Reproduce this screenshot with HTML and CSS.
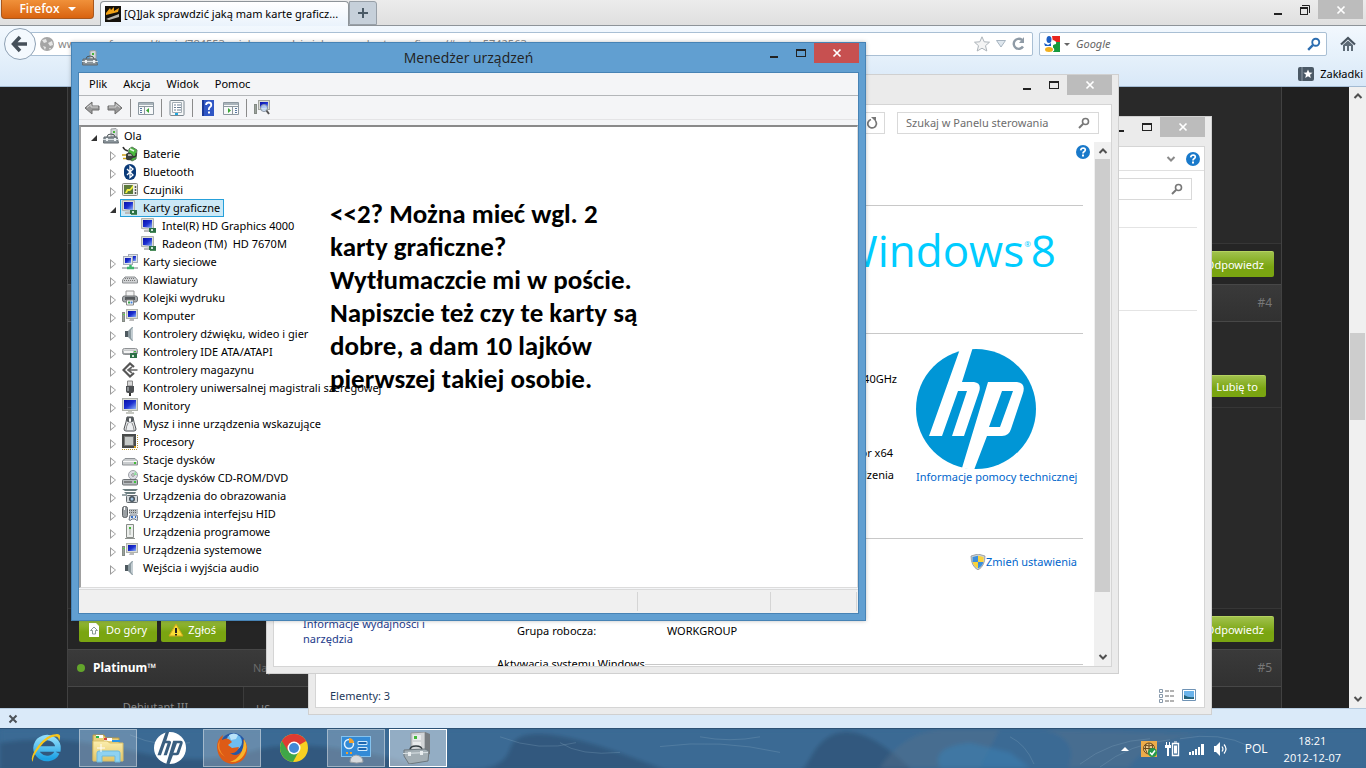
FILE: index.html
```html
<!DOCTYPE html>
<html lang="pl">
<head>
<meta charset="utf-8">
<title>Menedżer urządzeń</title>
<link rel="stylesheet" href="styles.css">
</head>
<body>
<svg class="defs" aria-hidden="true">
  <defs>
    <linearGradient id="screen" x1="0" y1="0" x2="1" y2="1"><stop offset="0" stop-color="#0a12a8"/><stop offset=".5" stop-color="#1c2fd0"/><stop offset="1" stop-color="#8fb4f8"/></linearGradient>
    <linearGradient id="metal" x1="0" y1="0" x2="0" y2="1"><stop offset="0" stop-color="#e8e8e8"/><stop offset="1" stop-color="#8a8f92"/></linearGradient>
    <linearGradient id="folder" x1="0" y1="0" x2="0" y2="1"><stop offset="0" stop-color="#fbeeae"/><stop offset="1" stop-color="#e3c565"/></linearGradient>
    <linearGradient id="ie" x1="0" y1="0" x2="0" y2="1"><stop offset="0" stop-color="#8fdcfa"/><stop offset="1" stop-color="#1ea2e4"/></linearGradient>
    <filter id="soft" x="0" y="0" width="1" height="1"><feGaussianBlur stdDeviation="2"/></filter>
    <symbol id="i-pc" viewBox="0 0 16 16"><path d="M8 6V1l5-.5 1 1V9H8z" fill="#d5d8da" stroke="#9a9ea1"/><path d="M10 3h2v2h-2z" fill="#47b53a"/><path d="M4 9q0-3 4-3t4 3" fill="none" stroke="#4d5558"/><path d="M1 9h13l1.500 6H.5z" fill="#8a949a" stroke="#626b70"/><path d="M0 11.500h16" stroke="#d7dee1"/><path d="M3 10h2v3H3zM11 10h2v3h-2z" fill="#eef2f4"/></symbol>
    <symbol id="i-bat" viewBox="0 0 16 16"><path d="M7 3l3-2 5 3-1 9-4 2-4-3z" fill="#49b93e" stroke="#5a7a58"/><path d="M8 3l4 2" stroke="#e4f7df" stroke-width="1.500" fill="none"/><path d="M1 1q1 3 5 4" stroke="#333" fill="none" stroke-width="1.500"/><path d="M0 9h5M1 12.500h5" stroke="#d0a31a" stroke-width="1.600"/><path d="M4 8q3-3 6 0l2 3-3 3q-4 1-5-1z" fill="#3a3f3a"/><path d="M6 8h3l1 2H6z" fill="#aaa"/><path d="M11 11q4 0 3-4" stroke="#333" fill="none" stroke-width="1.300"/></symbol>
    <symbol id="i-bt" viewBox="0 0 16 16"><rect x="2" y="0" width="12" height="16" rx="6" fill="#0a3a78"/><path d="M5 5l6 6-3 2.500V2.500L11 5l-6 6" fill="none" stroke="#fff" stroke-width="1.300"/></symbol>
    <symbol id="i-sens" viewBox="0 0 16 16"><rect x=".5" y="1.500" width="15" height="12" rx="1" fill="#ecece6" stroke="#8a8a80"/><rect x="2" y="3" width="9" height="9" fill="#5c7a3c"/><path d="M3 11l2-4h3l3-4v3L8 9H6l-1 2z" fill="#f0f03a"/><path d="M13.500 4v2M13.500 7v2M13.500 10v2" stroke="#555" stroke-width="1.500"/></symbol>
    <symbol id="i-mon" viewBox="0 0 16 16"><rect x=".5" y=".5" width="15" height="12" fill="#dadcd6" stroke="#b0b3ad"/><rect x="2" y="2" width="12" height="9" fill="url(#screen)"/><path d="M6 13h4v1h2v2H4v-2h2z" fill="#c5c7c1"/></symbol>
    <symbol id="i-gpu" viewBox="0 0 16 16"><path d="M.5.5h12v11l-12-1z" fill="#dadcd6" stroke="#b0b3ad"/><path d="M2 2h9v8l-9-1z" fill="url(#screen)"/><path d="M3 12h5v2H3z" fill="#bbb"/><rect x="8" y="10" width="7" height="4" fill="#2c7046"/><path d="M10 11h2v2h-2z" fill="#cfe8d6"/><path d="M9 14.500h6" stroke="#4f8f5e"/></symbol>
    <symbol id="i-net" viewBox="0 0 16 16"><rect x="6.500" y=".5" width="9" height="8" fill="#dfe3ea" stroke="#a6adb8"/><rect x="8" y="2" width="6" height="5" fill="url(#screen)"/><rect x="1.500" y="2.500" width="9" height="8" fill="#dfe3ea" stroke="#a6adb8"/><rect x="3" y="4" width="6" height="5" fill="url(#screen)"/><path d="M0 14h5M12 14h4" stroke="#b9bec2" stroke-width="2"/><path d="M5 14h7M8.500 11v3" stroke="#3fb56c" stroke-width="2.500"/></symbol>
    <symbol id="i-kbd" viewBox="0 0 16 16"><path d="M3 5h10l2.500 3v3h-15V8z" fill="#d0d2d4" stroke="#8b8e91"/><path d="M3 6.500h10M2 8.500h12" stroke="#777" stroke-dasharray="1 1"/></symbol>
    <symbol id="i-prn" viewBox="0 0 16 16"><path d="M4 1h8v6H4z" fill="#f3f3f3" stroke="#999"/><rect x=".5" y="6" width="15" height="6" rx="2" fill="#a5a9ac" stroke="#6c7073"/><path d="M3 7h10v3H3z" fill="#55595c"/><path d="M4.500 10h7v5h-7z" fill="#fff" stroke="#888"/><path d="M6 11.500h2v2H6z" fill="#3aa04a"/><path d="M8.500 11.500h2v2h-2z" fill="#4180d8"/></symbol>
    <symbol id="i-comp" viewBox="0 0 16 16"><rect x="4.500" y="1.500" width="11" height="9" fill="#dadcd6" stroke="#b0b3ad"/><rect x="6" y="3" width="8" height="6" fill="url(#screen)"/><path d="M8 11h4v2H7z" fill="#bbb"/><rect x=".5" y="4.500" width="2" height="9" fill="#9ba39c" stroke="#858b85"/><path d="M1 6h2v1H1z" fill="#5fd64a"/></symbol>
    <symbol id="i-snd" viewBox="0 0 16 16"><path d="M3 5h3l4-4h1v14h-1l-4-4H3z" fill="#8c9aa0"/><path d="M3 5h3v6H3z" fill="#4f5a60"/><path d="M9 4l2-3v14l-2-3z" fill="#c3cdd2"/></symbol>
    <symbol id="i-ide" viewBox="0 0 16 16"><rect x=".5" y="4.500" width="15" height="6" rx="2" fill="url(#metal)" stroke="#8f9295"/><path d="M2 7h9v2H2z" fill="#f4f4f4"/><rect x="8" y="9" width="7" height="5" fill="#2c7046"/><path d="M10 11h2v2h-2z" fill="#cfe8d6"/><path d="M12 7h2v1h-2z" fill="#3ec43e"/></symbol>
    <symbol id="i-stor" viewBox="0 0 16 16"><path d="M12 5L8 1.500 1.500 8 8 14.500 12 11" fill="none" stroke="#555" stroke-width="2.200"/><path d="M6 8h9.500M10 5L6 8l4 3" fill="none" stroke="#666" stroke-width="1.600"/></symbol>
    <symbol id="i-usb" viewBox="0 0 16 16"><path d="M5.500 1h5v5h-5z" fill="#d8d8d8" stroke="#888"/><path d="M4 6h8v5q0 2-2 2H6q-2 0-2-2z" fill="#4c4f52"/><path d="M7 13h2v3H7z" fill="#333"/><path d="M5 7h2v4H5z" fill="#8a8e91"/></symbol>
    <symbol id="i-mouse" viewBox="0 0 16 16"><path d="M5 1h6l1 5 2 7q0 2-2 2H4q-2 0-2-2l2-7z" fill="#eceef0" stroke="#4b4f52"/><path d="M5 1h6l.5 4q-3.500 3-7 0z" fill="#565b5f"/><rect x="7" y="2" width="2" height="4" rx="1" fill="#fff"/><path d="M6 7q-2 4-2 7M10 7q2 4 2 7" stroke="#888" fill="none"/></symbol>
    <symbol id="i-cpu" viewBox="0 0 16 16"><path d="M0 0h14v14H0z" fill="#484b4a"/><path d="M2.500 2.500h9v9h-9z" fill="#c6cac8" stroke="#777"/><path d="M0 15.500h15M15.500 1v14" stroke="#b89530" stroke-dasharray="1 1"/><path d="M12 12h2v2h-2z" fill="#d19b1d"/></symbol>
    <symbol id="i-disk" viewBox="0 0 16 16"><path d="M3 6.500h10l2.500 2.500v4H.5V9z" fill="#c9ccce" stroke="#8e9296"/><path d="M1 9.500h14" stroke="#f7f7f7"/><path d="M12 10h2v2h-2z" fill="#42bb35"/></symbol>
    <symbol id="i-dvd" viewBox="0 0 16 16"><circle cx="11" cy="5" r="4.500" fill="#dcdde4" stroke="#9fa2a8"/><circle cx="11" cy="5" r="1.300" fill="#fff" stroke="#888"/><path d="M13 1l2 4h-3z" fill="#8adf9a"/><rect x=".5" y="9.500" width="15" height="5.500" rx="1" fill="#b7bbbe" stroke="#6c7174"/><path d="M2 12h8" stroke="#444"/><path d="M12 11h2v2h-2z" fill="#3ec43e"/></symbol>
    <symbol id="i-img" viewBox="0 0 16 16"><path d="M0 1h16l-2 2H3zM2 4h12l-1 2H4z" fill="#6b7d80"/><rect x="4.500" y="7.500" width="11" height="7" rx="1" fill="#d5dadd" stroke="#62696e"/><circle cx="10" cy="11" r="3" fill="#46525c"/><circle cx="10" cy="11" r="1.500" fill="#9fc2e0"/><path d="M0 6h5v2H0z" fill="#9aa6aa"/></symbol>
    <symbol id="i-hid" viewBox="0 0 16 16"><rect x=".5" y=".5" width="5" height="11" rx="2" fill="#9ba0a4" stroke="#5c6165"/><path d="M2.500 1v3" stroke="#fff"/><path d="M7 3h9v5H7z" fill="#b9bec2"/><path d="M7 4.500h8M7 6.500h8" stroke="#666" stroke-dasharray="1 1"/><path d="M8 9h7l1 5q-2 1-3-1h-3q-1 2-3 1z" fill="#dfe5ee" stroke="#6b7280"/><path d="M9 11h2M13 11h1" stroke="#3670c8" stroke-width="2"/></symbol>
    <symbol id="i-soft" viewBox="0 0 16 16"><path d="M4.500.5h7v13h-7z" fill="#eceeec" stroke="#888c88"/><path d="M7 3h2v8H7z" fill="#c6cac6"/><path d="M7 3h2v2H7z" fill="#43b838"/><path d="M3 14h10v1H3z" fill="#8f938f"/></symbol>
    <symbol id="i-mag" viewBox="0 0 12 12"><circle cx="7.500" cy="4.500" r="3" fill="none" stroke="currentColor" stroke-width="1.600"/><path d="M5 7L1 11" stroke="currentColor" stroke-width="2"/></symbol>
    <symbol id="i-help" viewBox="0 0 14 14"><circle cx="7" cy="7" r="7" fill="#1979ca"/><path d="M4.700 5.300Q5 3 7.200 3q2.100.2 2.100 2Q9.300 6 8 6.800q-1 .6-1 1.700" fill="none" stroke="#fff" stroke-width="1.700"/><path d="M6 9.600h2v1.800H6z" fill="#fff"/></symbol>
    <symbol id="i-up" viewBox="0 0 10 8"><path d="M1.500 6L5 2.500 8.500 6" fill="none" stroke="#505050" stroke-width="2"/></symbol>
    <symbol id="i-down" viewBox="0 0 10 8"><path d="M1.500 2L5 5.500 8.500 2" fill="none" stroke="currentColor" stroke-width="2"/></symbol>
    <symbol id="i-min" viewBox="0 0 10 10"><path d="M1 9h8" stroke="#222" stroke-width="2"/></symbol>
    <symbol id="i-max" viewBox="0 0 10 10"><path d="M0 1h10v8H0zM1 3v5h8V3z" fill="#222" fill-rule="evenodd"/></symbol>
    <symbol id="i-close" viewBox="0 0 10 10"><path d="M1.500 1.500l7 7M8.500 1.500l-7 7" stroke="#fff" stroke-width="1.700"/></symbol>
    <symbol id="i-arrow" viewBox="0 0 16 14"><path d="M1 7l7-6v4h7v4H8v4z" fill="#999" stroke="#6d6d6d"/><path d="M3 6.500l4-3V6h7" stroke="#d4d4d4" fill="none"/></symbol>
    <symbol id="i-pane" viewBox="0 0 16 14"><path d="M.5 1.500h15v12H.5z" fill="#f7f9fa" stroke="#8d98a0"/><path d="M1 3h14" stroke="#a9b4bb" stroke-width="2"/><path d="M0 5.500h16" stroke="#8d98a0"/><path d="M6.500 5v9" stroke="#8d979e"/><path d="M2 7.500h3M2 9.500h3M2 11.500h3" stroke="#5878a0" stroke-dasharray="2 1"/><path d="M11 7v5L8 9.500z" fill="#38a632"/></symbol>
    <symbol id="i-hp" viewBox="0 0 120 120"><circle cx="60" cy="60" r="60" class="hp-disc"/><path class="hp-mark" fill-rule="evenodd" d="M44 0L57-2 46 33h12q8 1 5 10L48 87H36L51 42H42L26 87H13zM72 33h29q9 1 6 11L95 80q-2 7-9 7H71L58 121 46 119zM86 42L73 78H84L97 42z"/></symbol>
  </defs>
</svg>

<div class="desktop">
  <section class="browser" aria-label="Firefox">
    <header class="tabstrip">
      <button class="ff-menu">Firefox <span class="tri"></span></button>
      <button class="tab"><svg class="ic16" viewBox="0 0 16 16"><path d="M0 0h16v16H0z" fill="#15110b"/><path d="M1 7l4-5 1 2 3-3v4l5-3-1 4-12 3z" fill="#f3a316"/><path d="M1 13l13-5v3L4 14z" fill="#b9b5ac"/></svg><span>[Q]Jak sprawdzić jaką mam karte graficz...</span></button>
      <button class="newtab" aria-label="Nowa karta"><svg class="ic12" viewBox="0 0 12 12"><path d="M6 1v10M1 6h10" stroke="#4a5a66" stroke-width="2"/></svg></button>
      <div class="winctl browser-ctl"><button aria-label="Minimalizuj"><svg class="ic10"><use href="#i-min"/></svg></button><button aria-label="Przywróć"><svg class="ic10" viewBox="0 0 10 10"><path d="M0 2h8v8H0zM1 4v5h6V4z" fill="#222" fill-rule="evenodd"/><path d="M2 .5h7.500V8" fill="none" stroke="#222"/></svg></button><button class="close" aria-label="Zamknij"><svg class="ic10"><use href="#i-close"/></svg></button></div>
    </header>
    <div class="navbar">
      <button class="back" aria-label="Wstecz"><svg viewBox="0 0 18 18" class="ic18"><path d="M9 2L2.500 9 9 16M3 9h13" fill="none" stroke="#454f59" stroke-width="3.500"/></svg></button>
      <div class="urlbar">
        <svg class="ic14" viewBox="0 0 14 14"><circle cx="7" cy="7" r="7" fill="#a5a5a5"/><path d="M2 3l4-1 1 3-3 1zM8 6l4-2 1 4-3 1zM3 9l3 1-1 3zM9 11l2 0-1 2z" fill="#e6e6e6"/></svg>
        <input class="url" type="text" aria-label="Adres" value="www.mpcforum.pl/topic/784553-q-jak-sprawdzic-jaka-mam-karte-graficzna/#entry5742563">
        <svg class="ic16" viewBox="0 0 16 16"><path d="M8 .8l2.200 5 5.300.4-4 3.500 1.300 5.300L8 12.200 3.200 15l1.300-5.300-4-3.500 5.300-.4z" fill="#f4f4f4" stroke="#adb4ba"/></svg>
        <svg class="ic10" viewBox="0 0 10 10"><path d="M.5 1.500h9L5 8z" fill="#dfe7ee" stroke="#a7b4c0"/></svg>
        <svg class="ic14" viewBox="0 0 14 14"><path d="M11 9.500A5 5 0 1 1 10 3" fill="none" stroke="#8f9ba6" stroke-width="2.400"/><path d="M12 0v6H7z" fill="#8f9ba6"/></svg>
      </div>
      <div class="searchbox">
        <svg class="ic16" viewBox="0 0 16 16"><path d="M0 0h16v16H0z" fill="#fff"/><path d="M8 0h8v6H9z" fill="#e9261d"/><path d="M9 6h7v10H9z" fill="#179a3d"/><path d="M9 4q4 1 3 4-4 1-4 3 3 1 2 4l-2 1V5z" fill="#fff"/><ellipse cx="5" cy="3.500" rx="2.500" ry="3.500" fill="#1d5fc4"/><path d="M0 7l4 2 3-2v3H1z" fill="#1d5fc4"/><ellipse cx="5" cy="13.500" rx="4" ry="2.500" fill="#f2b01e"/></svg>
        <span class="tri small"></span>
        <input type="text" aria-label="Szukaj" placeholder="Google">
        <svg class="ic14 blue"><use href="#i-mag"/></svg>
      </div>
      <button class="home" aria-label="Strona startowa"><svg class="ic16" viewBox="0 0 16 16"><path d="M1 8.500L8 2l7 6.500" fill="none" stroke="#47535f" stroke-width="2.200"/><path d="M3 9l5-4.500L13 9v6h-2v-5H9v5H7v-5H5v5H3z" fill="#5e6b77"/></svg></button>
    </div>
    <div class="bookmarks"><button><svg class="ic16" viewBox="0 0 16 14"><rect width="16" height="14" rx="2" fill="#4b5966"/><path d="M4 0v14" stroke="#8e99a3"/><path d="M10 2.500l1.300 3 3.200.2-2.500 2 .8 3.300-2.800-1.800L7.200 11 8 7.700l-2.500-2 3.200-.2z" fill="#fff"/></svg>Zakładki</button></div>
    <div class="page">
      <main class="forum">
        <div class="post first"></div>
        <div class="actions"><button class="green reply">Odpowiedz</button></div>
        <div class="posthead"><a href="#p4">#4</a></div>
        <div class="post second"><button class="green like"><svg class="ic12" viewBox="0 0 12 12"><path d="M4 9l5-7 2 1-4 8z" fill="#fff"/></svg>Lubię to</button></div>
        <div class="post third"></div>
        <div class="actions"><button class="green"><svg class="ic16" viewBox="0 0 16 16"><path d="M3 1h7l3 3v11H3z" fill="#fff"/><path d="M8 5L4.500 8.500h2V12h3V8.500h2z" fill="none" stroke="#8a9a96"/></svg>Do góry</button><button class="green"><svg class="ic16" viewBox="0 0 16 16"><path d="M8 2l7 12H1z" fill="#f8dd35" stroke="#cfa91c"/><path d="M8 6v5M8 12v1.500" stroke="#222" stroke-width="2"/></svg>Zgłoś</button><button class="green reply">Odpowiedz</button></div>
        <div class="posthead"><span class="dot"></span><b>Platinum™</b><span class="when">Napisano</span><a href="#p5">#5</a></div>
        <div class="post last"><aside>Debiutant III</aside><p>HS</p></div>
      </main>
      <div class="scroll page-scroll"><svg class="arr"><use href="#i-up"/></svg><span class="thumb"></span><svg class="arr"><use href="#i-down"/></svg></div>
    </div>
    <div class="addonbar"><button aria-label="Zamknij pasek"><svg class="ic10" viewBox="0 0 10 10"><path d="M1.500 1.500l7 7M8.500 1.500l-7 7" stroke="#4c5258" stroke-width="2"/></svg></button></div>
  </section>

  <section class="win folder" aria-label="Folder">
    <div class="winctl"><button aria-label="Minimalizuj"><svg class="ic10"><use href="#i-min"/></svg></button><button aria-label="Maksymalizuj"><svg class="ic10"><use href="#i-max"/></svg></button><button class="close" aria-label="Zamknij"><svg class="ic10"><use href="#i-close"/></svg></button></div>
    <div class="client">
      <div class="ribbon"><svg class="arr light"><use href="#i-down"/></svg><svg class="ic14"><use href="#i-help"/></svg></div>
      <div class="folder-search"><div class="field"><svg class="ic12 grey"><use href="#i-mag"/></svg></div></div>
      <hr><hr>
      <div class="folder-status"><span>Elementy: 3</span><span class="views"><svg class="ic16" viewBox="0 0 16 14"><path d="M1.500.5h3v3h-3zM1.500 5.500h3v3h-3zM1.500 10.500h3v3h-3z" fill="#fff" stroke="#8799ab"/><path d="M7 2h4M12 2h4M7 7h4M12 7h4M7 12h4M12 12h4" stroke="#666"/></svg><svg class="ic14" viewBox="0 0 14 12"><path d="M.5.5h13v11H.5z" fill="#fff" stroke="#6f93b5"/><path d="M2 2h10v8H2z" fill="#6bb3ea"/><path d="M2 6q5 3 10 2v2H2z" fill="#22617a"/></svg></span></div>
    </div>
  </section>

  <section class="win system" aria-label="System">
    <div class="winctl"><button aria-label="Minimalizuj"><svg class="ic10"><use href="#i-min"/></svg></button><button aria-label="Maksymalizuj"><svg class="ic10"><use href="#i-max"/></svg></button><button class="close" aria-label="Zamknij"><svg class="ic10"><use href="#i-close"/></svg></button></div>
    <div class="client">
      <div class="sys-bar">
        <div class="field addr"><svg class="ic12" viewBox="0 0 12 12"><path d="M9.500 4A4.300 4.300 0 1 1 5 2.500" fill="none" stroke="#777" stroke-width="1.700"/><path d="M5 0h5v5z" fill="#777"/></svg></div>
        <div class="field"><input type="text" aria-label="Szukaj w Panelu sterowania" placeholder="Szukaj w Panelu sterowania"><svg class="ic12 grey"><use href="#i-mag"/></svg></div>
      </div>
      <div class="sys-body">
        <nav><a href="#perf">Informacje wydajności i narzędzia</a></nav>
        <div class="sys-main">
          <div class="s-top"></div>
          <div class="s-brand">Windows<sup>®</sup>8</div>
          <div class="s-spec">
            <div class="specs"><span>2.40GHz</span><span>Procesor x64</span><span>wprowadzenia</span></div>
            <div class="oem"><svg class="hp-big"><use href="#i-hp"/></svg><a href="#help">Informacje pomocy technicznej</a></div>
          </div>
          <div class="s-name"><a href="#change"><svg class="ic16" viewBox="0 0 16 16"><path d="M8 0l7 2q0 10-7 14Q1 12 1 2z" fill="#cfd3d6" stroke="#80868b" stroke-width=".7"/><path d="M8 1.700V8H2.500V3z" fill="#3c8edb"/><path d="M8 1.700V8h5.500V3z" fill="#fad33b"/><path d="M8 8v6.500Q3.500 12 2.700 8z" fill="#fad33b"/><path d="M8 8v6.500q4.500-2.500 5.300-6.500z" fill="#3c8edb"/></svg>Zmień ustawienia</a><dl><dt>Grupa robocza:</dt><dd>WORKGROUP</dd></dl></div>
          <div class="s-act">Aktywacja systemu Windows</div>
        </div>
        <div class="s-help"><svg class="ic14"><use href="#i-help"/></svg></div>
        <div class="scroll sys-scroll"><svg class="arr"><use href="#i-up"/></svg><span class="thumb"></span><svg class="arr"><use href="#i-down"/></svg></div>
      </div>
    </div>
  </section>

  <section class="win devmgr" aria-label="Menedżer urządzeń">
    <div class="title"><svg class="ic16"><use href="#i-pc"/></svg><h1>Menedżer urządzeń</h1></div>
    <div class="winctl"><button aria-label="Minimalizuj"><svg class="ic10"><use href="#i-min"/></svg></button><button aria-label="Maksymalizuj"><svg class="ic10"><use href="#i-max"/></svg></button><button class="close" aria-label="Zamknij"><svg class="ic10"><use href="#i-close"/></svg></button></div>
    <div class="client">
      <div class="menu"><button>Plik</button><button>Akcja</button><button>Widok</button><button>Pomoc</button></div>
      <div class="toolbar">
        <button aria-label="Wstecz"><svg class="ic16"><use href="#i-arrow"/></svg></button>
        <button aria-label="Dalej"><svg class="ic16 flip"><use href="#i-arrow"/></svg></button>
        <i></i>
        <button aria-label="Drzewo konsoli"><svg class="ic16"><use href="#i-pane"/></svg></button>
        <i></i>
        <button aria-label="Właściwości"><svg class="ic16" viewBox="0 0 16 16"><rect x="1" y=".5" width="14" height="15" rx="1" fill="#f5f7f8" stroke="#7d8890"/><path d="M3.500 2.500h9v10h-9z" fill="#fff" stroke="#a3adb4"/><path d="M5 5h2M8 5h4M5 7.500h2M8 7.500h4M5 10h2M8 10h4" stroke="#6b7f94"/><path d="M6 14h3" stroke="#1fa8e0" stroke-width="2"/></svg></button>
        <i></i>
        <button aria-label="Pomoc"><svg class="ic16" viewBox="0 0 16 16"><path d="M2 0h12v16H2z" fill="#2f56c4"/><path d="M2 0h2v16H2z" fill="#1b3a98"/><path d="M6 5q.3-2.500 2.800-2.500T11.300 5q0 1.300-1.500 2.300Q8.800 8 8.800 10" fill="none" stroke="#fff" stroke-width="1.800"/><path d="M8 11.500h2v2H8z" fill="#fff"/></svg></button>
        <button aria-label="Okienko akcji"><svg class="ic16 flip"><use href="#i-pane"/></svg></button>
        <i></i>
        <button aria-label="Skanuj"><svg class="ic16" viewBox="0 0 16 16"><rect x="4.500" y=".5" width="11" height="9" fill="#dadcd6" stroke="#a2a59f"/><rect x="6" y="2" width="8" height="6" fill="url(#screen)"/><rect x=".5" y="4.500" width="2" height="9" fill="#9ba39c" stroke="#858b85"/><circle cx="10" cy="8" r="3.500" fill="#c8e0fb" fill-opacity=".8" stroke="#8894a0"/><path d="M12.500 10.500L15 14" stroke="#555" stroke-width="2"/></svg></button>
      </div>
      <div class="treebox">
        <ul class="tree">
          <li><div class="row"><span class="tw open"></span><svg class="ic16"><use href="#i-pc"/></svg><span class="lb">Ola</span></div>
          <ul>
            <li><div class="row"><span class="tw"></span><svg class="ic16"><use href="#i-bat"/></svg><span class="lb">Baterie</span></div></li>
            <li><div class="row"><span class="tw"></span><svg class="ic16"><use href="#i-bt"/></svg><span class="lb">Bluetooth</span></div></li>
            <li><div class="row"><span class="tw"></span><svg class="ic16"><use href="#i-sens"/></svg><span class="lb">Czujniki</span></div></li>
            <li><div class="row"><span class="tw open"></span><span class="sel"><svg class="ic16"><use href="#i-gpu"/></svg><span class="lb">Karty graficzne</span></span></div>
            <ul>
              <li><div class="row"><span class="tw none"></span><svg class="ic16"><use href="#i-gpu"/></svg><span class="lb">Intel(R) HD Graphics 4000</span></div></li>
              <li><div class="row"><span class="tw none"></span><svg class="ic16"><use href="#i-gpu"/></svg><span class="lb">Radeon (TM)&nbsp; HD 7670M</span></div></li>
            </ul></li>
            <li><div class="row"><span class="tw"></span><svg class="ic16"><use href="#i-net"/></svg><span class="lb">Karty sieciowe</span></div></li>
            <li><div class="row"><span class="tw"></span><svg class="ic16"><use href="#i-kbd"/></svg><span class="lb">Klawiatury</span></div></li>
            <li><div class="row"><span class="tw"></span><svg class="ic16"><use href="#i-prn"/></svg><span class="lb">Kolejki wydruku</span></div></li>
            <li><div class="row"><span class="tw"></span><svg class="ic16"><use href="#i-comp"/></svg><span class="lb">Komputer</span></div></li>
            <li><div class="row"><span class="tw"></span><svg class="ic16"><use href="#i-snd"/></svg><span class="lb">Kontrolery dźwięku, wideo i gier</span></div></li>
            <li><div class="row"><span class="tw"></span><svg class="ic16"><use href="#i-ide"/></svg><span class="lb">Kontrolery IDE ATA/ATAPI</span></div></li>
            <li><div class="row"><span class="tw"></span><svg class="ic16"><use href="#i-stor"/></svg><span class="lb">Kontrolery magazynu</span></div></li>
            <li><div class="row"><span class="tw"></span><svg class="ic16"><use href="#i-usb"/></svg><span class="lb">Kontrolery uniwersalnej magistrali szeregowej</span></div></li>
            <li><div class="row"><span class="tw"></span><svg class="ic16"><use href="#i-mon"/></svg><span class="lb">Monitory</span></div></li>
            <li><div class="row"><span class="tw"></span><svg class="ic16"><use href="#i-mouse"/></svg><span class="lb">Mysz i inne urządzenia wskazujące</span></div></li>
            <li><div class="row"><span class="tw"></span><svg class="ic16"><use href="#i-cpu"/></svg><span class="lb">Procesory</span></div></li>
            <li><div class="row"><span class="tw"></span><svg class="ic16"><use href="#i-disk"/></svg><span class="lb">Stacje dysków</span></div></li>
            <li><div class="row"><span class="tw"></span><svg class="ic16"><use href="#i-dvd"/></svg><span class="lb">Stacje dysków CD-ROM/DVD</span></div></li>
            <li><div class="row"><span class="tw"></span><svg class="ic16"><use href="#i-img"/></svg><span class="lb">Urządzenia do obrazowania</span></div></li>
            <li><div class="row"><span class="tw"></span><svg class="ic16"><use href="#i-hid"/></svg><span class="lb">Urządzenia interfejsu HID</span></div></li>
            <li><div class="row"><span class="tw"></span><svg class="ic16"><use href="#i-soft"/></svg><span class="lb">Urządzenia programowe</span></div></li>
            <li><div class="row"><span class="tw"></span><svg class="ic16"><use href="#i-comp"/></svg><span class="lb">Urządzenia systemowe</span></div></li>
            <li><div class="row"><span class="tw"></span><svg class="ic16"><use href="#i-snd"/></svg><span class="lb">Wejścia i wyjścia audio</span></div></li>
          </ul></li>
        </ul>
      </div>
      <div class="status"><span></span><span></span><span></span></div>
    </div>
    <p class="note">&lt;&lt;2? Można mieć wgl. 2<br>karty graficzne?<br>Wytłumaczcie mi w poście.<br>Napiszcie też czy te karty są<br>dobre, a dam 10 lajków<br>pierwszej takiej osobie.</p>
  </section>

  <footer class="taskbar">
    <svg class="wall" viewBox="0 0 1366 40" preserveAspectRatio="none" aria-hidden="true"><g filter="url(#soft)"><path d="M0 0h1366v40H0z" fill="#3a6a94"/><path d="M0 14q60-9 130 8t120 1 150 9 110-12 140 16 160-6 100 10v6H0z" fill="#2f4f70" opacity=".6"/><path d="M880 40q20-34 60-40h60l-20 40zM1040 0q40 8 28 40h60q20-30 80-34z" fill="#56708b" opacity=".45"/><path d="M940 40q-10-22 30-26l40 10 20 16z" fill="#3a7fb0" opacity=".6"/></g><path d="M130 6q30 14 60 8M500 8q40 16 76 6M560 14q20 14 60 10M660 18q60-8 120 6M700 8q30 6 60 0M1080 36q30-24 70-26M1100 39q30-24 70-28M1180 10q40-8 70 8M1010 8q16 8 24 28" fill="none" stroke="#86a5bf" opacity=".3"/></svg>
    <button aria-label="Internet Explorer"><svg class="ic32" viewBox="0 0 32 32"><path d="M27 20.500A11 10.500 0 1 1 28 17H8" fill="none" stroke="url(#ie)" stroke-width="5.500"/><path d="M3 30Q-1 26 8 14T27 2q5 0 2 7 0-5-4-4.500Q18 5 10 15T3 30z" fill="#f8c61c"/></svg></button>
    <button class="run" aria-label="Eksplorator plików"><svg class="ic32" viewBox="0 0 32 32"><path d="M1 3h11l2 3h13v22H1z" fill="#e8cf7c" stroke="#b99b43"/><path d="M4 3h7v3H4z" fill="#fff"/><path d="M4 4h3v2H4z" fill="#28b54c"/><path d="M12 6h8v3h-8z" fill="#fff"/><path d="M12 6h3v2h-3z" fill="#d94141"/><path d="M1 9h14l3 2h13v18H1z" fill="url(#folder)" stroke="#d9bf69"/><path d="M20 8h8v2h-8z" fill="#2b95e6"/><path d="M5 30V21q0-2 2-2h19q2 0 2 2v9h-5v-6H10v6z" fill="#8ed2f2" stroke="#6fbadd"/><path d="M9 12v8M5 16h8" stroke="#fff"/></svg></button>
    <button aria-label="HP"><svg class="ic32 hp-small"><use href="#i-hp"/></svg></button>
    <button class="run" aria-label="Firefox"><svg class="ic32" viewBox="0 0 32 32"><circle cx="17" cy="14" r="13" fill="#2457a5"/><circle cx="18" cy="10" r="8" fill="#6ebdf0"/><path d="M13 3q5-3 9 0l-2 4-5 1z" fill="#b8e3fa"/><path d="M1 15Q1 7 7 3l-1 5q5-3 8 0l2 2-4 3 4 3 7-1q-2 7-9 6 6 5 12-2 3-5 1-12 5 5 4 12-2 12-15 13Q2 30 1 15z" fill="#dd5b16"/><path d="M28 7q5 8 0 16t-14 7q14-5 14-23z" fill="#f8b42a"/><path d="M4 8q-3 10 5 17Q1 20 2 12z" fill="#f28a25"/></svg></button>
    <button aria-label="Chrome"><svg class="ic32" viewBox="0 0 32 32"><circle cx="16" cy="16" r="14" fill="#f8d021"/><path d="M16 16L3.900 9A14 14 0 0 1 28.100 9z" fill="#df3b32"/><path d="M16 16L3.900 9A14 14 0 0 0 15 30l6-11z" fill="#3fa648"/><path d="M16 9h12a14 14 0 0 0-24 0l6 10z" fill="#df3b32"/><circle cx="16" cy="16" r="6.500" fill="#fff"/><circle cx="16" cy="16" r="5" fill="#4389d8"/></svg></button>
    <button class="run" aria-label="Panel sterowania"><svg class="ic32" viewBox="0 0 32 32"><rect x="1.500" y="4.500" width="29" height="20" fill="#338ad6" stroke="#84c2ee"/><circle cx="9" cy="12" r="4.500" fill="none" stroke="#dff0fc" stroke-width="1.500"/><path d="M9 11V6a5 5 0 0 1 5 5z" fill="#f5a02a"/><path d="M18 9.500h9v3h-9zM18 15.500h9v3h-9z" fill="#1d66b0" stroke="#cfe8fb"/><path d="M6 20h2v2H6zM10 20h2v2h-2z" fill="#f5a02a"/><path d="M10 30q0-6 6-7 7 1 7 7-6 2-13 0z" fill="#d7dadd" stroke="#9aa0a5"/></svg></button>
    <button class="run active" aria-label="Menedżer urządzeń"><svg class="ic32" viewBox="0 0 32 32"><path d="M9 1l14-1v23H9z" fill="#d2d5d7" stroke="#91969a"/><path d="M23 0l5 2v20l-5 1z" fill="#777c80"/><path d="M11 3h8v5h-8zM11 10h8v5h-8z" fill="#e9ebec"/><path d="M12 4h3v3h-3z" fill="#44b93b"/><path d="M8 18q0-4 6-4t6 4" fill="none" stroke="#333c41" stroke-width="1.500"/><path d="M2 18l21-1 4 2-1 10-19 3-5-8z" fill="#a3aeb4" stroke="#6d777d"/><path d="M1 21.500l25-1" stroke="#dce3e6"/><path d="M6 20h3v4H6zM18 19h3v4h-3z" fill="#e8edef"/></svg></button>
    <div class="tray">
      <span class="tri up"></span>
      <svg class="ic16" viewBox="0 0 16 16"><path d="M0 0h16v16H0z" fill="#edac49"/><circle cx="8" cy="7.500" r="5.500" fill="#f3cf8e" stroke="#6b4a1c"/><path d="M2.500 7.500h11M8 2v11M4 4q4 2 8 0M5 3q-2 5 1 9M11 3q2 5-1 9" fill="none" stroke="#6b4a1c"/><circle cx="11.500" cy="11.500" r="4.500" fill="#249a4b"/><path d="M9 11.500l2 2 3-4" fill="none" stroke="#fff" stroke-width="1.500"/></svg>
      <svg class="ic16" viewBox="0 0 16 16"><path d="M7.500 2.500h6v12h-6z" fill="none" stroke="#fff" stroke-width="1.400"/><path d="M9 .5h3v1H9zM9 4.500h3v8H9zM1 1h1v3H1zM4 1h1v3H4zM0 4h6v3H4v8H2V7H0z" fill="#fff"/></svg>
      <svg class="ic16" viewBox="0 0 16 16"><path d="M0 11h2v3H0zM3 10h2v4H3zM6 8h2v6H6zM9 6h2v8H9zM12 3h3v11h-3z" fill="#fff"/></svg>
      <svg class="ic16" viewBox="0 0 16 16"><path d="M1 5h2l4-4v14l-4-4H1z" fill="#fff"/><path d="M9 5.500q2 2.500 0 5M11 3.500q4 4.500 0 9" fill="none" stroke="#fff" stroke-width="1.200"/></svg>
      <span class="lang">POL</span>
      <time>18:21<br>2012-12-07</time>
    </div>
  </footer>
</div>
</body>
</html>
```
FILE: styles.css
```css
* { box-sizing: border-box; }
body { margin: 0; font: 11px/16px "Noto Sans", "Open Sans", sans-serif; color: #000; overflow: hidden; }
button { margin: 0; padding: 0; border: 0; background: none; font: inherit; color: inherit; display: inline-flex; align-items: center; justify-content: center; white-space: nowrap; }
input { font: inherit; border: 0; padding: 0; background: none; min-width: 0; flex: 1; outline: 0; }
a { text-decoration: none; color: #0066cc; }
svg { display: block; flex: none; }
.defs { position: absolute; width: 0; height: 0; }
.ic10 { width: 10px; height: 10px; }
.ic12 { width: 12px; height: 12px; }
.ic14 { width: 14px; height: 14px; }
.ic16 { width: 16px; height: 16px; }
.ic18 { width: 18px; height: 18px; }
.ic32 { width: 32px; height: 32px; }
.arr { width: 10px; height: 8px; color: #505050; }
.arr.light { color: #8a8a8a; }
.blue { color: #2b6db0; }
.grey { color: #777; }
.flip { transform: scaleX(-1); }

.desktop { position: relative; display: flex; flex-direction: column; height: 100vh; overflow: hidden; }
.browser { flex: 1; min-height: 0; display: flex; flex-direction: column; }

.tri { display: inline-block; border: 4px solid transparent; border-top-color: #fff; border-bottom: 0; }
.tri.small { border-width: 3px; border-top-color: #666; border-bottom: 0; }
.tri.up { border: 4px solid transparent; border-bottom-color: #fff; border-top: 0; }

.tabstrip { display: flex; align-items: flex-start; height: 26px; padding-left: 1px; background: linear-gradient(#ececec, #dfdfdf); border-bottom: 1px solid #8e9499; }
.ff-menu { width: 93px; height: 19px; gap: 8px; font: 600 12px/16px "Open Sans", sans-serif; color: #fff; background: linear-gradient(#f0913a, #d9630f); border: 1px solid #a8571c; border-top: 0; border-radius: 0 0 4px 4px; }
.tab { width: 249px; height: 25px; margin: 1px 0 0 6px; gap: 3px; padding: 2px 4px; justify-content: flex-start; background: linear-gradient(#fff, #eaf3fc); border: 1px solid #8e9499; border-bottom: 0; border-radius: 4px 4px 0 0; }
.newtab { width: 28px; height: 24px; margin-top: 1px; background: #c6d0da; border: 1px solid #98a0a8; border-radius: 0 3px 0 0; }
.winctl { display: flex; }
.winctl button { width: 27px; height: 20px; }
.winctl .close { width: 45px; background: #bcbcbc; }
.browser-ctl { margin-left: auto; padding-right: 3px; }
.browser-ctl .close { height: 19px; }

.navbar { display: flex; align-items: center; height: 36px; padding: 0 10px 0 4px; background: linear-gradient(#f2f8fe, #e3effa); }
.back { position: relative; z-index: 1; width: 32px; height: 32px; border: 1px solid #8ea1b4; border-radius: 50%; background: #f4f9fe; }
.urlbar, .searchbox { display: flex; align-items: center; height: 24px; background: #fff; border: 1px solid #a9bfd4; border-radius: 2px; }
.urlbar { flex: 1; gap: 6px; margin-left: -6px; padding: 0 6px 0 9px; }
.urlbar .url { color: #888; margin-left: -2px; }
.searchbox { width: 288px; gap: 4px; margin: 0 13px 0 6px; padding: 0 5px 0 4px; }
.searchbox input { margin-left: 2px; }
.searchbox input::placeholder { font-style: italic; color: #666; opacity: 1; }
.bookmarks { display: flex; justify-content: flex-end; align-items: center; height: 25px; padding: 0 3px; background: linear-gradient(#e3effa, #d8e8f8); border-bottom: 1px solid #a3bbd3; }
.bookmarks button { gap: 6px; }

.page { flex: 1; min-height: 0; display: flex; background: #202020; }
.forum { flex: 1; min-width: 0; margin: 0 67px; overflow: hidden; background: #292929; border: solid #414141; border-width: 0 1px; color: #888; }
.post.first { height: 156px; }
.actions { display: flex; align-items: flex-start; gap: 4px; height: 41px; padding: 7px 7px 0 11px; background: #252525; border-top: 1px solid #363636; }
.green { height: 26px; padding: 0 10px 0 7px; gap: 4px; color: #fff; border-radius: 2px; background: linear-gradient(#a0c14c, #7aa511 60%); border-top: 1px solid #b5d25f; }
.reply { margin-left: auto; width: 90px; padding: 0 10px 0 0; justify-content: flex-end; }
.posthead { display: flex; align-items: center; height: 38px; padding: 0 9px; background: linear-gradient(#3a3a3a, #313131); border: solid #474747; border-width: 1px 0; }
.posthead a { margin-left: auto; color: #777; font-size: 12px; }
.posthead b { color: #fff; font-size: 12px; width: 160px; }
.posthead .when { color: #6a6a6a; }
.dot { width: 8px; height: 8px; margin: 0 8px 0 0; border-radius: 50%; background: #63a52b; }
.post.second { display: flex; justify-content: flex-end; align-items: flex-start; height: 86px; padding: 53px 15px 0; border-bottom: 1px solid #363636; }
.like { height: 22px; padding: 0 8px; }
.post.third { height: 200px; }
.post.last { display: flex; }
.post.last aside { width: 176px; padding-top: 12px; text-align: center; border-right: 1px solid #3b3b3b; background: #252525; }
.post.last p { margin: 14px 12px; }
.scroll { display: flex; flex-direction: column; align-items: center; background: #f0f0f0; }
.scroll .thumb { background: #cdcdcd; width: 15px; }
.page-scroll { width: 17px; padding: 5px 0; justify-content: space-between; }
.page-scroll .thumb { height: 87px; margin-bottom: 42px; }

.addonbar { display: flex; align-items: center; height: 20px; padding-left: 8px; background: #daeaf9; border-top: 1px solid #b5cade; }

.win { position: absolute; display: flex; flex-direction: column; background: #ebebeb; border: 1px solid #d0d0d0; padding: 0 6px 6px; }
.win > .winctl { position: absolute; top: 0; right: 6px; }
.client { flex: 1; min-height: 0; display: flex; flex-direction: column; background: #fff; border: 1px solid #d5d5d5; }
.field { display: flex; align-items: center; height: 22px; border: 1px solid #d9d9d9; padding: 0 8px; background: #fff; }
.field input::placeholder { color: #6d6d6d; opacity: 1; }

.folder { left: 308px; top: 116px; width: 904px; height: 599px; padding-top: 29px; }
.ribbon { display: flex; justify-content: flex-end; align-items: center; gap: 10px; height: 24px; padding-right: 4px; border-bottom: 1px solid #e0e0e0; }
.folder-search { display: flex; justify-content: flex-end; padding: 7px 12px; }
.folder-search .field { width: 202px; justify-content: flex-end; }
.folder hr { width: calc(100% - 7px); margin: 20px 0 0; border: 0; border-top: 1px solid #e4e4e4; }
.folder hr + hr { margin: 82px 0 0; }
.folder-status { display: flex; justify-content: space-between; align-items: center; height: 22px; margin-top: auto; padding: 0 8px 0 14px; color: #1e395b; }
.views { display: flex; gap: 8px; }

.system { left: 266px; top: 74px; width: 853px; height: 600px; padding-top: 29px; }
.sys-bar { display: flex; gap: 12px; padding: 7px 12px 8px 30px; }
.sys-bar .addr { flex: 1; justify-content: flex-end; padding: 0 6px; }
.sys-bar .field:last-child { width: 202px; }
.sys-body { flex: 1; min-height: 0; display: flex; overflow: hidden; }
.sys-body nav { width: 223px; padding: 474px 29px 0; line-height: 15px; }
.sys-body nav a { display: block; width: 150px; color: #1d3b8b; }
.sys-main { flex: 1; }
.s-top { height: 64px; border-bottom: 1px solid #c8c8c8; }
.s-brand { height: 128px; padding: 12px 27px 0 0; font: 44px/64px "Open Sans", sans-serif; text-align: right; color: #00ccff; border-bottom: 1px solid #c8c8c8; }
.s-brand sup { font-size: 8px; vertical-align: 20px; line-height: 1; }
.s-spec { display: flex; justify-content: flex-end; gap: 19px; height: 205px; padding-top: 15px; border-bottom: 1px solid #c8c8c8; }
.specs { display: flex; flex-direction: column; align-items: flex-end; padding-top: 22px; }
.specs span:nth-child(2) { margin: 58px 4px 6px 0; }
.specs span:nth-child(3) { margin-right: 3px; }
.oem { width: 167px; white-space: nowrap; }
.hp-big { width: 120px; height: 120px; }
.hp-disc { fill: var(--disc, #0096d6); }
.hp-mark { fill: var(--mark, #fff); }
.hp-small { --disc: #fff; --mark: #3a5f80; }
.s-name { height: 117px; padding-top: 15px; }
.s-name a { display: flex; justify-content: flex-end; align-items: center; padding-right: 6px; }
.s-name dl { display: flex; margin: 53px 0 0 20px; }
.s-name dt { width: 150px; }
.s-name dd { margin: 0; }
.s-act { display: flex; align-items: center; }
.s-act::after { content: ""; flex: 1; border-top: 1px solid #c8c8c8; }
.s-help { padding-top: 3px; margin-left: -7px; width: 18px; }
.sys-scroll { width: 17px; padding: 5px 0; }
.sys-scroll .thumb { height: 433px; margin: 4px 0 auto; }

.devmgr { left: 71px; top: 42px; width: 795px; height: 579px; padding: 0 7px 7px; background: #619fd1; border-color: #4783b5; box-shadow: 0 0 4px rgba(0, 0, 0, .25); }
.devmgr .client { border: 1px solid #4783b5; margin: 0 -1px -1px; background: #f4f5f7; }
.devmgr .winctl .close { background: #c75050; }
.title { display: flex; align-items: center; height: 29px; padding-left: 3px; }
.title h1 { flex: 1; margin: 0 19px 0 0; text-align: center; font: 14px/20px "Open Sans", sans-serif; color: #222; }
.menu { display: flex; gap: 16px; height: 23px; padding-left: 10px; border-bottom: 1px solid #b3b6b9; }
.toolbar { display: flex; align-items: center; gap: 7px; height: 24px; padding-left: 5px; border-bottom: 1px solid #e4e4e6; }
.toolbar i { width: 1px; height: 18px; background: #8b8b8b; }
.treebox { flex: 1; min-height: 0; margin-top: 5px; background: #fff; border: 1px solid #dcdcdc; border-left: 2px solid #a0a0a0; border-top: 2px solid #8a8a8a; }
.tree, .tree ul { list-style: none; margin: 0; padding: 0; }
.tree { padding: 0 0 0 8px; }
.tree ul { padding-left: 19px; }
.row { display: flex; align-items: center; height: 18px; white-space: pre; }
.tw { width: 14px; height: 12px; flex: none; position: relative; }
.tw::before { content: ""; position: absolute; left: 2px; top: 3px; width: 6px; height: 10px; background: #999; clip-path: polygon(0 0, 100% 50%, 0 100%); }
.tw::after { content: ""; position: absolute; left: 3px; top: 5px; width: 4px; height: 6px; background: #fff; clip-path: polygon(0 0, 100% 50%, 0 100%); }
.tw.open::before { width: 6px; height: 6px; top: 5px; background: #333; clip-path: polygon(100% 0, 100% 100%, 0 100%); }
.tw.open::after, .tw.none::before, .tw.none::after { display: none; }
.lb { padding-left: 5px; }
.sel { display: flex; align-items: center; height: 18px; margin-left: -2px; padding: 0 3px 0 1px; background: #cbe8f6; border: 1px solid #26a0da; }
.status { display: flex; height: 24px; margin-top: 1px; padding: 2px 1px 2px 0; background: #f0f0f0; border-top: 1px solid #dadada; }
.status span { border-right: 1px solid #d5d5d5; width: 86px; }
.status span:first-child { flex: 1; }
.status span:nth-child(2) { width: 133px; }
.note { position: absolute; left: 258px; top: 154px; margin: 0; font: bold 27px/33px Carlito, Lato, sans-serif; white-space: nowrap; }

.taskbar { position: relative; display: flex; gap: 4px; height: 40px; padding-left: 17px; background: #396791; border-top: 1px solid #2d5275; }
.wall { position: absolute; inset: 0; width: 100%; height: 100%; }
.taskbar button { position: relative; width: 58px; height: 38px; }
.taskbar .run { background: rgba(255, 255, 255, .22); border: 1px solid rgba(255, 255, 255, .4); }
.taskbar .active { background: rgba(255, 255, 255, .45); border-color: #fff; }
.tray { position: relative; display: flex; align-items: center; gap: 8px; margin-left: auto; padding-right: 25px; color: #fff; font: 12px/17px "Open Sans", sans-serif; }
.tray .tri { margin-right: 4px; }
.lang { margin: 0 8px; }
.tray time { text-align: center; font-size: 11px; }
```
